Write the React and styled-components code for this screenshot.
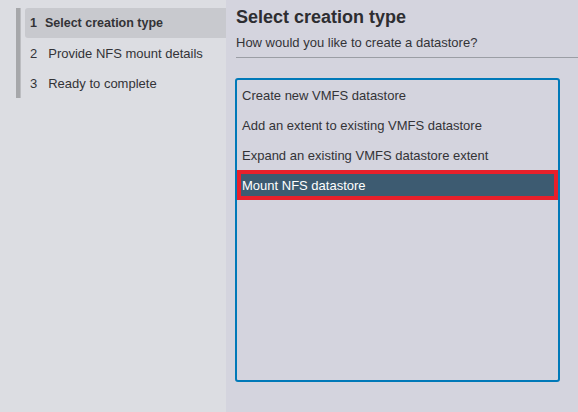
import React from "react";
import styled, { createGlobalStyle } from "styled-components";

const Global = createGlobalStyle`
  html, body { margin: 0; padding: 0; }
  body {
    font-family: "Liberation Sans", Arial, sans-serif;
    color: #2f2f33;
    -webkit-font-smoothing: antialiased;
  }
`;

const Layout = styled.div`
  display: flex;
  width: 578px;
  height: 412px;
  overflow: hidden;
`;

const Sidebar = styled.aside`
  width: 226px;
  flex: none;
  background: #dcdde2;
  padding: 8px 0 0 16px;
  box-sizing: border-box;
`;

const StepList = styled.ol`
  list-style: none;
  margin: 0;
  padding: 0 0 0 5px;
  border-left: 4px solid #a6a7aa;
  box-shadow: inset 1px 0 0 #bcbdc1;
`;

const Step = styled.li`
  height: 30px;
  display: flex;
  align-items: center;
  padding-left: 5px;
  font-size: ${(p) => (p.$active ? "12.5px" : "13px")};
  font-weight: ${(p) => (p.$active ? 700 : 400)};
  color: #333337;
  background: ${(p) => (p.$active ? "#c8c9ce" : "transparent")};
  border-radius: 3px 0 0 3px;
  white-space: nowrap;
`;

const StepNum = styled.span`
  display: inline-block;
  margin-right: ${(p) => (p.$active ? "8px" : "11px")};
`;

const Main = styled.main`
  flex: 1;
  background: #d4d4de;
  padding: 5px 0 0 9px;
  box-sizing: border-box;
  display: flex;
  flex-direction: column;
`;

const Title = styled.h2`
  margin: 0 0 0 1px;
  font-size: 18px;
  line-height: 24px;
  font-weight: 700;
  color: #2d2d31;
`;

const Subtitle = styled.p`
  margin: 5px 0 0 1px;
  font-size: 13px;
  line-height: 18px;
  color: #333337;
  padding-bottom: 5px;
  border-bottom: 1px solid #9b9ea5;
`;

const ListBox = styled.div`
  margin-top: 20px;
  width: 325px;
  height: 304px;
  box-sizing: border-box;
  border: 2px solid #0079b8;
  border-radius: 3px;
  display: flex;
  flex-direction: column;
`;

const Option = styled.div`
  height: 30px;
  flex: none;
  display: flex;
  align-items: center;
  padding-left: 5px;
  font-size: 13px;
  color: ${(p) => (p.$selected ? "#ffffff" : "#333337")};
  background: ${(p) => (p.$selected ? "#3d5b71" : "transparent")};
  box-shadow: ${(p) => (p.$selected ? "inset 0 0 0 4px #e8202b" : "none")};
  white-space: nowrap;
`;

const steps = ["Select creation type", "Provide NFS mount details", "Ready to complete"];
const options = [
  "Create new VMFS datastore",
  "Add an extent to existing VMFS datastore",
  "Expand an existing VMFS datastore extent",
  "Mount NFS datastore",
];

export default function App() {
  return (
    <>
      <Global />
      <Layout>
        <Sidebar>
          <StepList>
            {steps.map((s, i) => (
              <Step key={s} $active={i === 0}>
                <StepNum $active={i === 0}>{i + 1}</StepNum>
                {s}
              </Step>
            ))}
          </StepList>
        </Sidebar>
        <Main>
          <Title>Select creation type</Title>
          <Subtitle>How would you like to create a datastore?</Subtitle>
          <ListBox>
            {options.map((o, i) => (
              <Option key={o} $selected={i === 3}>
                {o}
              </Option>
            ))}
          </ListBox>
        </Main>
      </Layout>
    </>
  );
}
